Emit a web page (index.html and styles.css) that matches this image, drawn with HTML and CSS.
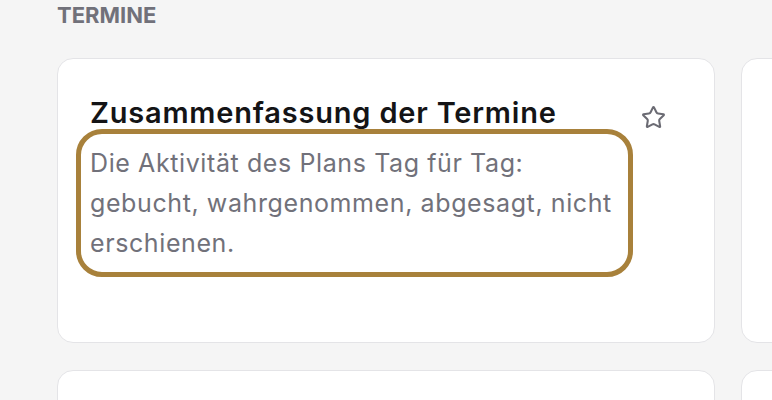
FILE: index.html
```html
<!DOCTYPE html>
<html lang="de">
<head>
<meta charset="utf-8">
<title>Termine</title>
<link rel="stylesheet" href="styles.css">
</head>
<body>
<main class="page">
  <h2 class="section-title">Termine</h2>
  <div class="grid">
    <article class="card">
      <div class="card-head">
        <div class="card-text">
          <h3 class="card-title">Zusammenfassung der Termine</h3>
          <p class="card-desc focused" tabindex="0">Die Aktivität des Plans Tag für Tag: gebucht, wahrgenommen, abgesagt, nicht erschienen.</p>
        </div>
        <button class="fav" aria-label="Favorit">
          <svg width="25" height="25" viewBox="0 0 24 24" fill="none" stroke="currentColor" stroke-width="2" stroke-linecap="round" stroke-linejoin="round"><path d="M11.525 2.295a.53.53 0 0 1 .95 0l2.31 4.679a2.123 2.123 0 0 0 1.595 1.16l5.166.756a.53.53 0 0 1 .294.904l-3.736 3.638a2.123 2.123 0 0 0-.611 1.878l.882 5.14a.53.53 0 0 1-.771.56l-4.618-2.428a2.122 2.122 0 0 0-1.973 0L6.396 21.01a.53.53 0 0 1-.77-.56l.881-5.139a2.122 2.122 0 0 0-.611-1.879L2.160 9.795a.53.53 0 0 1 .294-.906l5.165-.755a2.122 2.122 0 0 0 1.597-1.16z"/></svg>
        </button>
      </div>
    </article>
    <article class="card"></article>
    <article class="card"></article>
    <article class="card"></article>
  </div>
</main>
</body>
</html>
```
FILE: styles.css
```css
html, body {
  margin: 0;
  padding: 0;
  background: #f5f5f5;
  font-family: Inter, "Noto Sans", "Liberation Sans", sans-serif;
  overflow: hidden;
}

.page {
  padding: 2px 0 0 57px;
}

.section-title {
  margin: 0;
  font-size: 22px;
  line-height: 27px;
  font-weight: 700;
  color: #71717a;
  text-transform: uppercase;
}

.grid {
  margin-top: 29px;
  display: grid;
  grid-template-columns: 658px 658px;
  grid-auto-rows: 285px;
  column-gap: 26px;
  row-gap: 27px;
}

.card {
  box-sizing: border-box;
  background: #ffffff;
  border: 1px solid #e4e4e7;
  border-radius: 16px;
  padding: 36px 48px 32px 32px;
}

.card-head {
  display: flex;
  align-items: flex-start;
  gap: 22px;
}

.card-text {
  flex: 1;
  min-width: 0;
}

.card-title {
  margin: 0;
  font-size: 29px;
  line-height: 36px;
  font-weight: 600;
  letter-spacing: 0.8px;
  color: #141416;
}

.card-desc {
  margin: 12px 0 0;
  font-size: 25px;
  line-height: 40px;
  letter-spacing: 0.6px;
  color: #71717a;
  border-radius: 12px;
}

.focused {
  outline: 5px solid #a8813b;
  outline-offset: 9px;
}

.fav {
  flex: none;
  margin-top: 10px;
  padding: 0;
  border: 0;
  background: none;
  color: #6b6b73;
  width: 25px;
  height: 25px;
  display: flex;
}
```
